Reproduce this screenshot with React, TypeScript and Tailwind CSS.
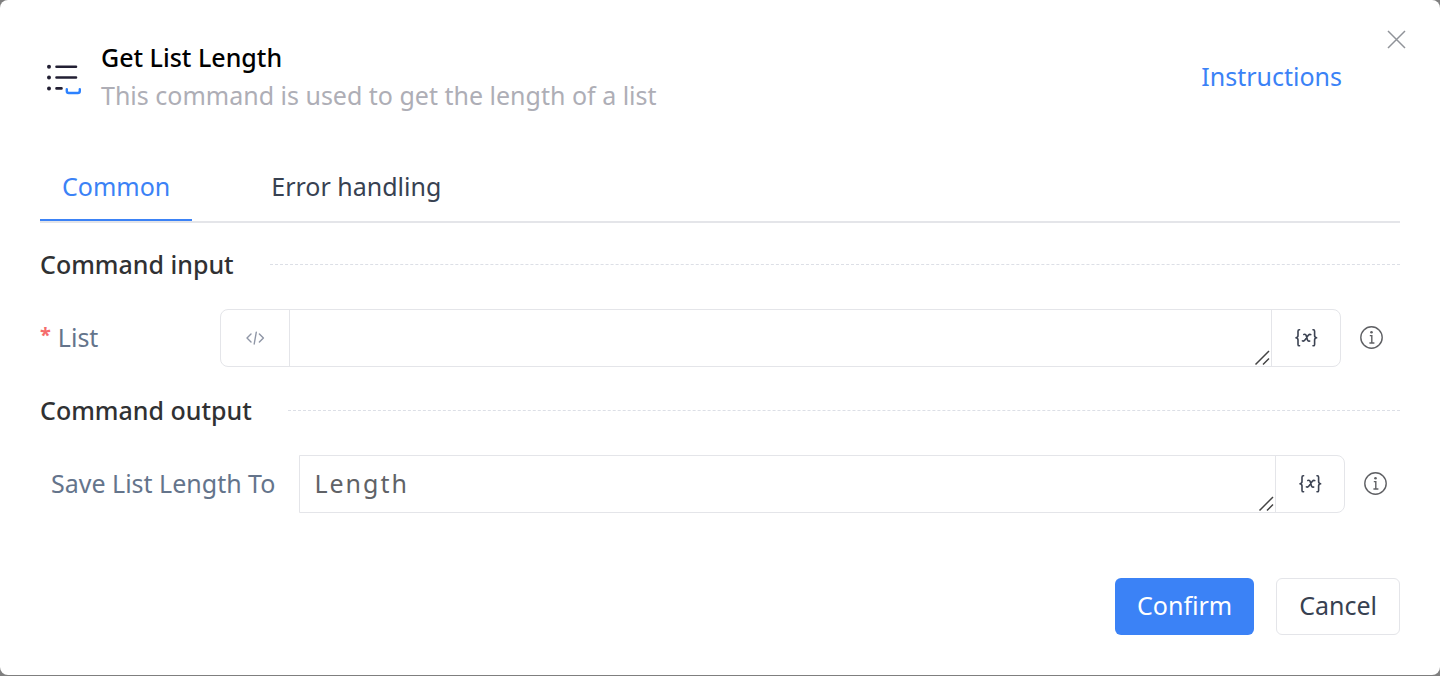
import { useState } from "react";

function ListLengthIcon() {
  return (
    <svg className="mt-1 h-9 w-9 shrink-0" viewBox="0 0 36 36" fill="none" aria-hidden="true">
      <g stroke="#221f33" strokeWidth="2.6" strokeLinecap="round">
        <path d="M11.5 6.8H31M11.5 17.5H31M11.5 28.4H16.5" />
      </g>
      <g fill="#221f33">
        <circle cx="4" cy="6.8" r="2" />
        <circle cx="4" cy="17.5" r="2" />
        <circle cx="4" cy="28.4" r="2" />
      </g>
      <path
        d="M21.8 29.2v1.8q0 2 2 2h9q2 0 2-2v-1.8"
        stroke="#2d82ff"
        strokeWidth="2.4"
        strokeLinecap="round"
      />
    </svg>
  );
}

function CodeIcon() {
  return (
    <svg
      className="h-4 w-5"
      viewBox="0 0 20 16"
      fill="none"
      stroke="#8f96a6"
      strokeWidth="1.4"
      strokeLinecap="round"
      strokeLinejoin="round"
      aria-hidden="true"
    >
      <path d="M6 4 2 8l4 4M14.4 4l4 4-4 4M11.3 2.2 9.2 14" />
    </svg>
  );
}

function VariableIcon() {
  return (
    <svg
      className="h-5 w-6"
      viewBox="0 0 24 20"
      fill="none"
      stroke="#3b4252"
      strokeWidth="1.6"
      strokeLinecap="round"
      strokeLinejoin="round"
      aria-hidden="true"
    >
      <path d="M5.600 1.800H5.200Q4 1.800 4 3.200V7.600Q4 9.600 2 9.800q2 .2 2 2.200V16.400q0 1.400 1.200 1.400h.4" />
      <path d="M19 1.800h.4q1.200 0 1.200 1.400V7.600q0 2 2 2.200-2 .2-2 2.200V16.400q0 1.400-1.200 1.400H19" />
      <path d="M9.800 6.400q1.800-.6 2.300.9l1.400 4.600q.5 1.600 2.200 1.100M16.800 6.600q-1.300-.7-2.500.7l-3.400 4.800q-1.200 1.600-2.500.8" />
    </svg>
  );
}

function InfoIcon() {
  return (
    <svg className="h-6 w-6" viewBox="0 0 24 24" fill="none" stroke="#5f6064" aria-hidden="true">
      <circle cx="11.5" cy="11.5" r="10.7" strokeWidth="1.4" />
      <path d="M9.8 9.6h2v7.4M9.4 17h5" strokeWidth="1.4" />
      <circle cx="11.5" cy="6.2" r="1.3" fill="#5f6064" stroke="none" />
    </svg>
  );
}

function ResizeGrip() {
  return (
    <svg
      className="pointer-events-none absolute right-px bottom-0 h-4 w-4"
      viewBox="0 0 16 16"
      stroke="#444444"
      strokeWidth="1.5"
      aria-hidden="true"
    >
      <path d="M1.500 14.500 15 1M9 14.500l6-6" />
    </svg>
  );
}

type FieldProps = {
  id: string;
  value: string;
  onChange: (value: string) => void;
  withMode?: boolean;
};

function Field({ id, value, onChange, withMode }: FieldProps) {
  return (
    <div
      className={
        withMode
          ? "flex h-[58px] min-w-0 flex-1 rounded-lg border border-[#e4e5e9]"
          : "flex h-[58px] min-w-0 flex-1 rounded-r-lg border border-[#e4e5e9]"
      }
    >
      {withMode && (
        <button
          type="button"
          aria-label="Expression mode"
          className="flex w-[69px] shrink-0 items-center justify-center border-r border-[#e4e5e9]"
        >
          <CodeIcon />
        </button>
      )}
      <div className="relative flex min-w-0 flex-1">
        <textarea
          id={id}
          rows={1}
          value={value}
          onChange={(e) => onChange(e.target.value)}
          className="h-full w-full resize-none overflow-hidden px-[14px] py-2 text-[25px] leading-[38px] tracking-[2px] text-[#606266] outline-none"
        />
        <ResizeGrip />
      </div>
      <button
        type="button"
        aria-label="Choose variable"
        className="flex w-[69px] shrink-0 items-center justify-center border-l border-[#e4e5e9]"
      >
        <VariableIcon />
      </button>
    </div>
  );
}

function SectionTitle({ children }: { children: string }) {
  return (
    <div className="flex items-center gap-9">
      <h2 className="font-medium text-[#303133]">{children}</h2>
      <div className="flex-1 border-t border-dashed border-[#dcdfe6]" />
    </div>
  );
}

export default function App() {
  const [tab, setTab] = useState("common");
  const [list, setList] = useState("");
  const [output, setOutput] = useState("Length");

  return (
    <div className="min-h-screen bg-[#7f7f7f] font-['Noto_Sans',sans-serif] text-[25px] leading-[38px]">
      <main className="relative rounded-lg bg-white px-10 pt-[38px] pb-10">
        <button type="button" aria-label="Close" className="absolute top-[29px] right-[34px]">
          <svg className="h-5 w-5" viewBox="0 0 20 20" stroke="#909399" strokeWidth="1.5" aria-hidden="true">
            <path d="m2 2 17 17M19 2 2 19" />
          </svg>
        </button>

        <header className="flex items-center pr-[58px]">
          <div className="flex flex-1 items-center gap-5 pl-[5px]">
            <ListLengthIcon />
            <div>
              <h1 className="font-medium text-black">Get List Length</h1>
              <p className="text-[#aeaeb6]">This command is used to get the length of a list</p>
            </div>
          </div>
          <a href="#instructions" className="text-[#3b82f6]">
            Instructions
          </a>
        </header>

        <div role="tablist" className="mt-[37px] flex gap-[57px] border-b-2 border-[#e4e5e9]">
          <button
            type="button"
            role="tab"
            aria-selected={tab === "common"}
            onClick={() => setTab("common")}
            className={
              tab === "common"
                ? "border-b-2 border-[#3b82f6] px-[22px] pt-4 pb-[14px] text-[#3b82f6]"
                : "border-b-2 border-transparent px-[22px] pt-4 pb-[14px] text-[#374151]"
            }
          >
            Common
          </button>
          <button
            type="button"
            role="tab"
            aria-selected={tab === "error"}
            onClick={() => setTab("error")}
            className={
              tab === "error"
                ? "border-b-2 border-[#3b82f6] px-[22px] pt-4 pb-[14px] text-[#3b82f6]"
                : "border-b-2 border-transparent px-[22px] pt-4 pb-[14px] text-[#374151]"
            }
          >
            Error handling
          </button>
        </div>

        <form onSubmit={(e) => e.preventDefault()}>
          <section className="mt-[22px]">
            <SectionTitle>Command input</SectionTitle>
            <div className="mt-[26px] flex items-center">
              <label htmlFor="list" className="flex w-[180px] gap-[7px] pb-[3px] text-[#64748b]">
                <span className="text-xl leading-[34px] font-bold text-[#f56c6c]">*</span>
                List
              </label>
              <Field id="list" value={list} onChange={setList} withMode />
              <button type="button" aria-label="About list" className="w-[59px] pl-[19px]">
                <InfoIcon />
              </button>
            </div>
          </section>

          <section className="mt-6">
            <SectionTitle>Command output</SectionTitle>
            <div className="mt-[26px] flex items-center">
              <label htmlFor="output" className="pr-6 pb-[3px] pl-[11px] text-[#64748b]">
                Save List Length To
              </label>
              <Field id="output" value={output} onChange={setOutput} />
              <button type="button" aria-label="About list length" className="w-[55px] pl-[19px]">
                <InfoIcon />
              </button>
            </div>
          </section>

          <div className="mt-[65px] flex justify-end gap-[22px]">
            <button type="submit" className="h-[57px] rounded-md bg-[#3b82f6] px-[22px] pb-[3px] text-white">
              Confirm
            </button>
            <button
              type="button"
              className="h-[57px] rounded-md border border-[#e4e5e9] px-[22px] pb-[3px] text-[#374151]"
            >
              Cancel
            </button>
          </div>
        </form>
      </main>
    </div>
  );
}
